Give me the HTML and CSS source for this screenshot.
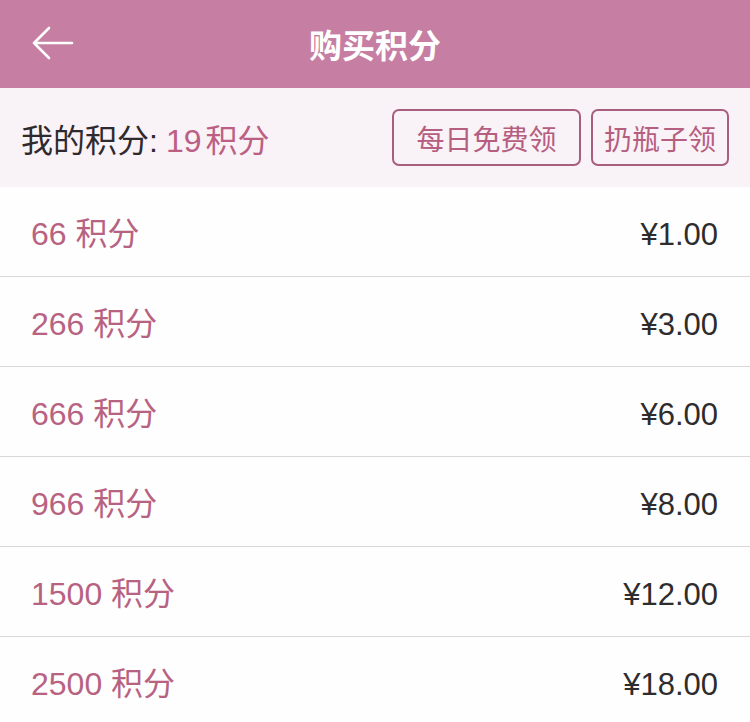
FILE: index.html
```html
<!DOCTYPE html>
<html lang="zh">
<head>
<meta charset="utf-8">
<link rel="stylesheet" href="styles.css">
</head>
<body>
<div class="page">
  <header class="nav">
    <svg class="back" width="42" height="34" viewBox="0 0 42 34">
      <path d="M17 2 L2 17 L17 32 M2 17 H40" fill="none" stroke="#fff" stroke-width="2.6" stroke-linecap="round" stroke-linejoin="round"/>
    </svg>
    <div class="title">购买积分</div>
  </header>
  <section class="summary">
    <div class="mine">我的积分:<span class="num">19</span><span class="unit">积分</span></div>
    <div class="actions">
      <div class="btn btn-daily">每日免费领</div>
      <div class="btn btn-bottle">扔瓶子领</div>
    </div>
  </section>
  <ul class="list">
    <li class="row"><span class="pts">66 积分</span><span class="price">¥1.00</span></li>
    <li class="row"><span class="pts">266 积分</span><span class="price">¥3.00</span></li>
    <li class="row"><span class="pts">666 积分</span><span class="price">¥6.00</span></li>
    <li class="row"><span class="pts">966 积分</span><span class="price">¥8.00</span></li>
    <li class="row"><span class="pts">1500 积分</span><span class="price">¥12.00</span></li>
    <li class="row"><span class="pts">2500 积分</span><span class="price">¥18.00</span></li>
  </ul>
</div>
</body>
</html>
```
FILE: styles.css
```css
html, body {
  margin: 0;
  padding: 0;
  background: #fefefe;
  font-family: "Liberation Sans", "Noto Sans CJK SC", sans-serif;
}
.page {
  width: 750px;
  height: 722px;
  overflow: hidden;
}
.nav {
  height: 88px;
  background: #c67fa2;
  display: flex;
  align-items: center;
  justify-content: center;
  position: relative;
}
.back {
  position: absolute;
  left: 32px;
  top: 26px;
}
.title {
  color: #fff;
  font-size: 33px;
  font-weight: bold;
  font-family: "Noto Sans CJK SC", sans-serif;
}
.summary {
  height: 99px;
  background: #f9f2f7;
  display: flex;
  align-items: center;
  justify-content: space-between;
  padding: 0 21px;
  box-sizing: border-box;
}
.mine {
  font-size: 32px;
  color: #2f2a2e;
}
.mine .num {
  color: #bc5f82;
  margin-left: 8px;
}
.mine .unit {
  color: #bc5f82;
  margin-left: 4px;
}
.actions {
  display: flex;
  gap: 10px;
}
.btn {
  height: 57px;
  box-sizing: border-box;
  border: 2px solid #a85f7e;
  border-radius: 7px;
  color: #b55e80;
  font-size: 28px;
  display: flex;
  align-items: center;
  justify-content: center;
  font-family: "Noto Sans CJK SC", sans-serif;
}
.btn-daily { width: 189px; }
.btn-bottle { width: 138px; }
.list {
  list-style: none;
  margin: 0;
  padding: 0;
}
.row {
  height: 90px;
  box-sizing: border-box;
  border-bottom: 1px solid #d9d7d8;
  display: flex;
  align-items: baseline;
  justify-content: space-between;
  padding: 29px 32px 0 31px;
  line-height: 36px;
}
.pts {
  color: #b86282;
  font-size: 32px;
}
.price {
  color: #2e2c2d;
  font-size: 31px;
}
```
